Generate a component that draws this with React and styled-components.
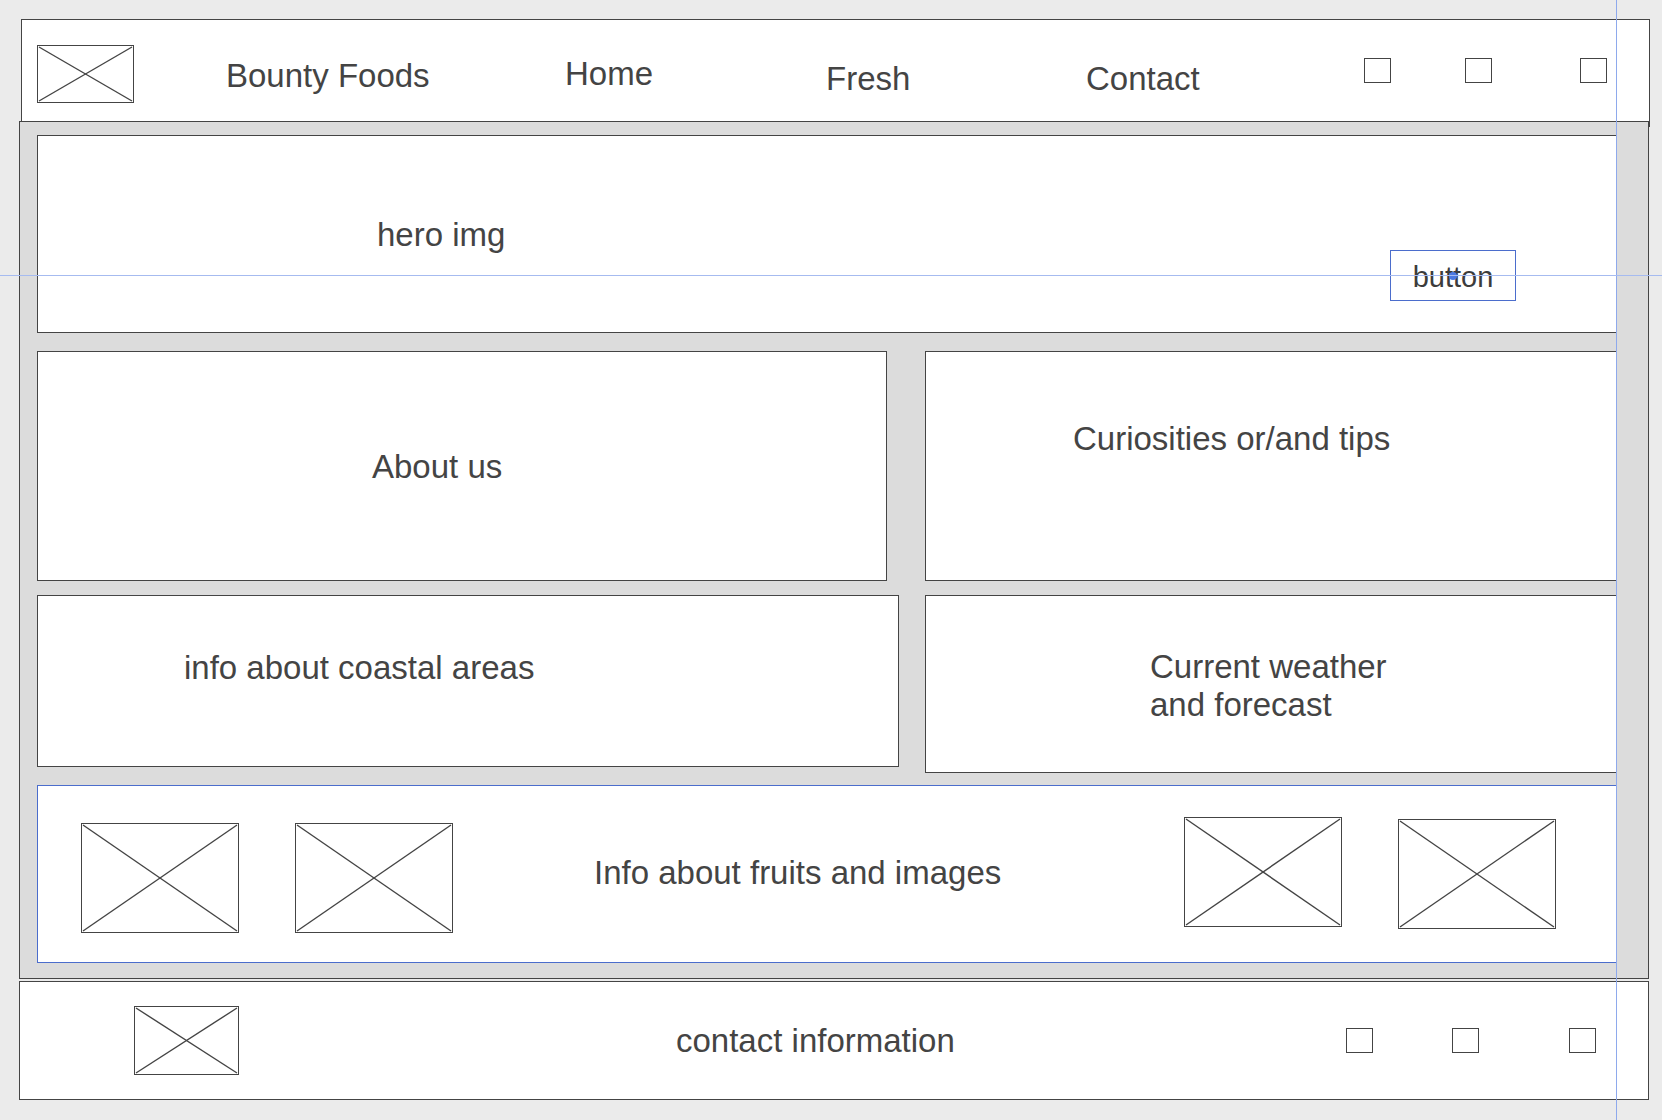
import React from 'react';
import styled, { createGlobalStyle } from 'styled-components';

const GlobalStyle = createGlobalStyle`
  * {
    box-sizing: border-box;
  }
  body {
    margin: 0;
    background-color: #ebebeb;
    font-family: 'Liberation Sans', Arial, sans-serif;
    color: #444;
  }
`;

const Page = styled.div`
  position: relative;
  width: 1662px;
  min-height: 1120px;
  padding: 19px 0 0 19px;
  display: flex;
  flex-direction: column;
  overflow: hidden;
`;

const Header = styled.header`
  margin-left: 2px;
  width: 1629px;
  height: 108px;
  border: 1px solid #444;
  background-color: white;
  padding-left: 15px;
  display: grid;
  grid-template-columns: 189px 339px 261px 260px 278px 101px 115px auto;
  align-items: start;
`;

const Label = styled.div`
  font-size: ${(p) => p.$size || 33}px;
  line-height: ${(p) => p.$lh || 1};
  margin-top: ${(p) => p.$top || 0}px;
  white-space: nowrap;
`;

const Square = styled.div`
  width: 27px;
  height: 25px;
  border: 1px solid #444;
  margin-top: ${(p) => p.$top || 0}px;
`;

const Main = styled.main`
  position: relative;
  z-index: 1;
  margin-top: -6px;
  width: 1630px;
  height: 858px;
  border: 1px solid #444;
  background-color: #dcdcdc;
  padding: 13px 31px 15px 17px;
  display: flex;
  flex-direction: column;
`;

const Row = styled.div`
  display: flex;
  justify-content: space-between;
  align-items: flex-start;
  margin-top: ${(p) => p.$top || 0}px;
`;

const Card = styled.section`
  width: ${(p) => (p.$w ? `${p.$w}px` : '100%')};
  height: ${(p) => p.$h}px;
  flex-shrink: 0;
  background-color: white;
  border: 1px solid ${(p) => (p.$blue ? '#4b6dcc' : '#444')};
  display: flex;
  align-items: ${(p) => (p.$center ? 'center' : 'flex-start')};
  padding-left: ${(p) => p.$pl || 0}px;
  padding-top: ${(p) => p.$pt || 0}px;
`;

const Hero = styled(Card)`
  justify-content: space-between;
`;

const HeroButton = styled.button`
  position: relative;
  align-self: flex-end;
  margin: 0 100px 31px 0;
  width: 126px;
  height: 51px;
  border: 1px solid #4b6dcc;
  background: white;
  font-family: 'Liberation Sans', Arial, sans-serif;
  font-size: 29px;
  color: #3c3c3c;
  padding: 4px 0 0 0;
  cursor: pointer;
`;

const Handle = styled.span`
  position: absolute;
  left: 58px;
  top: 21px;
  width: 8px;
  height: 8px;
  border-radius: 50%;
  background-color: #4a78e0;
`;

const FruitRow = styled(Card)`
  display: grid;
  grid-template-columns: 214px 299px 590px 214px auto;
  align-items: start;
  padding-left: 43px;
`;

const Footer = styled.footer`
  margin-top: 2px;
  width: 1630px;
  height: 119px;
  border: 1px solid #444;
  background-color: white;
  padding-left: 114px;
  display: grid;
  grid-template-columns: 542px 670px 106px 117px auto;
  align-items: center;
`;

const GuideV = styled.div`
  position: absolute;
  z-index: 5;
  top: 0;
  bottom: 0;
  left: 1616px;
  width: 1px;
  background-color: #8ea9ec;
  pointer-events: none;
`;

const GuideH = styled.div`
  position: absolute;
  z-index: 5;
  left: 0;
  right: 0;
  top: 275px;
  height: 1px;
  background-color: #a6bbf0;
  pointer-events: none;
`;

const Placeholder = ({ w, h, top = 0 }) => (
  <svg
    width={w}
    height={h}
    viewBox={`0 0 ${w} ${h}`}
    style={{ display: 'block', marginTop: top }}
  >
    <rect x='0.5' y='0.5' width={w - 1} height={h - 1} fill='white' stroke='#444' />
    <line x1='2' y1='2' x2={w - 2} y2={h - 2} stroke='#444' strokeWidth='1.4' />
    <line x1='2' y1={h - 2} x2={w - 2} y2='2' stroke='#444' strokeWidth='1.4' />
  </svg>
);

const App = () => {
  return (
    <>
      <GlobalStyle />
      <Page>
        <Header>
          <Placeholder w={97} h={58} top={25} />
          <Label $top={39}>Bounty Foods</Label>
          <Label $top={37}>Home</Label>
          <Label $top={42}>Fresh</Label>
          <Label $top={42}>Contact</Label>
          <Square $top={38} />
          <Square $top={38} />
          <Square $top={38} />
        </Header>

        <Main>
          <Hero $h={198} $center $pl={339}>
            <Label>hero img</Label>
            <HeroButton>
              button
              <Handle />
            </HeroButton>
          </Hero>

          <Row $top={18}>
            <Card $w={850} $h={230} $center $pl={334}>
              <Label>About us</Label>
            </Card>
            <Card $w={692} $h={230} $pl={147} $pt={70}>
              <Label>Curiosities or/and tips</Label>
            </Card>
          </Row>

          <Row $top={14}>
            <Card $w={862} $h={172} $pl={146} $pt={55}>
              <Label>info about coastal areas</Label>
            </Card>
            <Card $w={692} $h={178} $pl={224} $pt={52}>
              <Label $lh={1.16}>
                Current weather
                <br />
                and forecast
              </Label>
            </Card>
          </Row>

          <Row $top={12}>
            <FruitRow $h={178} $blue>
              <Placeholder w={158} h={110} top={37} />
              <Placeholder w={158} h={110} top={37} />
              <Label $top={70}>Info about fruits and images</Label>
              <Placeholder w={158} h={110} top={31} />
              <Placeholder w={158} h={110} top={33} />
            </FruitRow>
          </Row>
        </Main>

        <Footer>
          <Placeholder w={105} h={69} />
          <Label>contact information</Label>
          <Square />
          <Square />
          <Square />
        </Footer>

        <GuideV />
        <GuideH />
      </Page>
    </>
  );
};

export default App;
